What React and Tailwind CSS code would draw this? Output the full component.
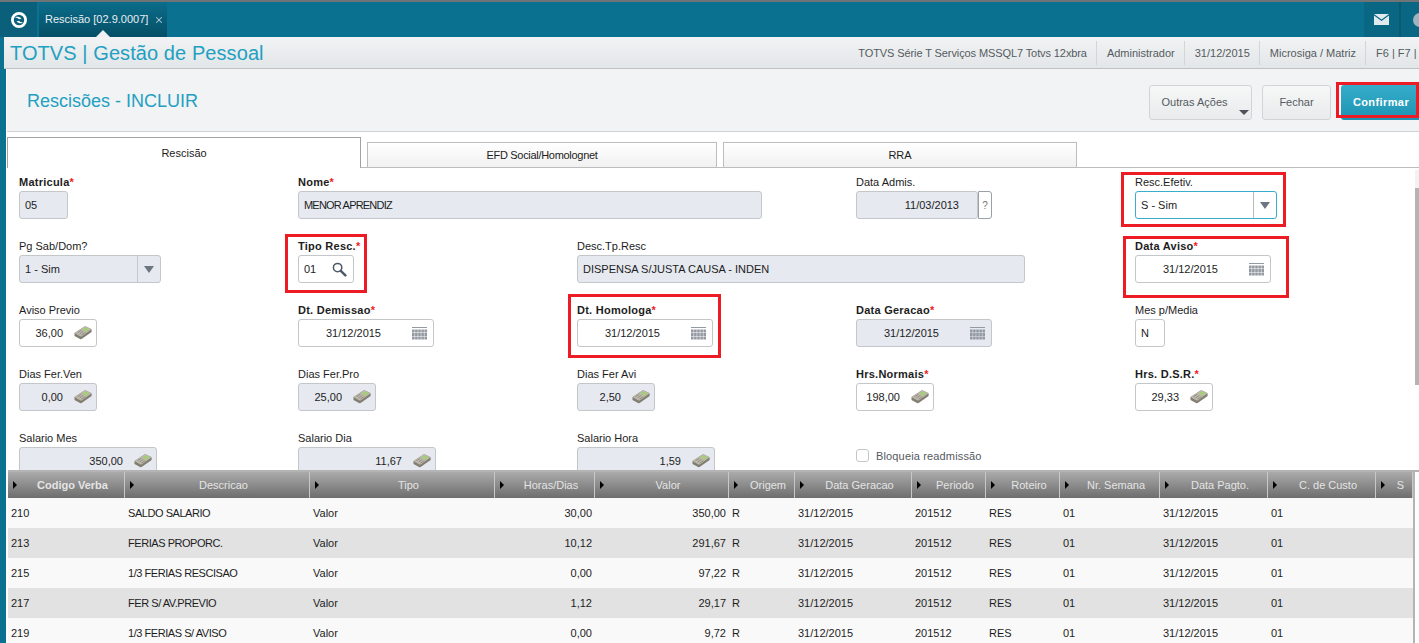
import { X } from 'lucide-react';

// ícones desenhados à mão
function Logo() {
  return (
    <svg width="18" height="18" viewBox="0 0 18 18" fill="none">
      <circle cx="9" cy="9" r="6.6" stroke="#fff" strokeWidth="2.8" />
      <path d="M5 6.2 C7 5.4 10 6 11.5 7.6 L9.2 8.2 C8 7.2 6.5 6.8 5 6.2 Z" fill="#fff" />
      <path d="M13 11.8 C11 12.6 8 12 6.5 10.4 L8.8 9.8 C10 10.8 11.5 11.2 13 11.8 Z" fill="#fff" />
    </svg>
  );
}

function Money() {
  return (
    <svg width="18" height="14" viewBox="0 0 18 14" className="shrink-0">
      <path d="M0.5 7 L10.5 0.6 Q11.5 0.2 12.5 0.7 L17.6 3.2 L17.6 6 L8 12.8 Q7 13.4 6 12.9 L0.5 10 Z" fill="#827e72" />
      <path d="M0.5 7 L10.5 0.6 Q11.5 0.2 12.5 0.7 L17.6 3.2 L8 10.2 Q7 10.7 6 10.2 Z" fill="#bdb9ad" />
      <path d="M8.6 3.4 L11.4 1.6 L15.4 3.6 L12.4 5.8 Z" fill="#a4cf73" />
      <path d="M3.4 6.8 L7.4 4.2 M5.4 8 L9.4 5.4 M7.4 9.2 L11.4 6.6" stroke="#8f8b7c" strokeWidth="0.9" />
    </svg>
  );
}

function Calendar() {
  return (
    <svg width="15" height="13" viewBox="0 0 15 13" className="shrink-0" fill="#949aa2">
      <rect x="0" y="0" width="15" height="1" />
      {[2.5, 6, 9.5].map((y) =>
        [0, 3.1, 6.2, 9.3, 12.4].map((x) => <rect key={`${x}-${y}`} x={x} y={y} width="2.6" height="3" />)
      )}
    </svg>
  );
}

function Lupa() {
  return (
    <svg width="15" height="15" viewBox="0 0 15 15" fill="none" className="shrink-0">
      <circle cx="5.6" cy="5.6" r="4.2" stroke="#4d5a66" strokeWidth="1.5" />
      <path d="M8.8 8.8 L13.4 13.4" stroke="#4d5a66" strokeWidth="2.4" strokeLinecap="round" />
    </svg>
  );
}

function Seta() {
  return <span className="w-0 h-0 border-x-[5px] border-x-transparent border-t-[7px] border-t-[#6d7680]" />;
}

function SetaHeader() {
  return <span className="w-0 h-0 border-y-[4px] border-y-transparent border-l-[4px] border-l-black shrink-0" />;
}

const redBox = 'absolute border-[3px] border-[#ed1c24] pointer-events-none';

function Field({ label, req, bold, value, w, off, align = 'left', pr, icon, combo, focus, mark, help, tight }) {
  return (
    <div className="relative h-[64px]">
      <div className={`h-4 text-[11px] leading-[14px] text-[#1d1d1d] whitespace-nowrap ${bold ? 'font-bold tracking-[0.25px]' : ''}`}>
        {label}
        {req && <span className="text-[#ed1c24]">*</span>}
      </div>
      <div className="flex">
        <div
          className={`h-[28px] shrink-0 flex items-center rounded-[3px] border text-[11px] text-[#1d1d1d] ${w} ${off ? 'bg-[#e6e9f0]' : 'bg-white'} ${focus ? 'border-[#39aecb]' : 'border-[#c4c7ca]'}`}
        >
          <span className={`flex-1 min-w-0 pl-[5px] whitespace-nowrap ${align === 'right' ? 'text-right' : ''} ${tight ? 'tracking-[-0.8px]' : ''} ${pr || ''}`}>{value}</span>
          {icon === 'money' && <span className="mr-[4px] flex"><Money /></span>}
          {icon === 'cal' && <span className="mr-[6px] flex"><Calendar /></span>}
          {icon === 'lupa' && <span className="mr-[6px] flex"><Lupa /></span>}
          {combo && (
            <span className={`h-full w-[23px] flex items-center justify-center border-l ${focus ? 'border-[#b5bbc0]' : 'border-[#c4c7ca]'}`}>
              <Seta />
            </span>
          )}
        </div>
        {help && (
          <div className="h-[28px] w-[14px] shrink-0 flex items-center justify-center rounded-r-[3px] border border-[#9aa0a6] text-[10px] text-[#777] bg-white">?</div>
        )}
      </div>
      {mark && <div className={`${redBox} ${mark}`} />}
    </div>
  );
}

const colunas = [
  ['Codigo Verba', 'w-[117px]', 'font-bold'],
  ['Descricao', 'w-[185px]', ''],
  ['Tipo', 'w-[185px]', ''],
  ['Horas/Dias', 'w-[100px]', ''],
  ['Valor', 'w-[134px]', ''],
  ['Origem', 'w-[66px]', ''],
  ['Data Geracao', 'w-[117px]', ''],
  ['Periodo', 'w-[74px]', ''],
  ['Roteiro', 'w-[74px]', ''],
  ['Nr. Semana', 'w-[100px]', ''],
  ['Data Pagto.', 'w-[108px]', ''],
  ['C. de Custo', 'w-[108px]', ''],
  ['S', 'w-[37px]', ''],
];

const linhas = [
  ['210', 'SALDO SALARIO', '30,00', '350,00'],
  ['213', 'FERIAS PROPORC.', '10,12', '291,67'],
  ['215', '1/3 FERIAS RESCISAO', '0,00', '97,22'],
  ['217', 'FER S/ AV.PREVIO', '1,12', '29,17'],
  ['219', '1/3 FERIAS S/ AVISO', '0,00', '9,72'],
];

function Linha({ dados, par }) {
  const [cod, desc, horas, valor] = dados;
  const cell = 'shrink-0 px-[3px] whitespace-nowrap overflow-hidden';
  return (
    <div className={`h-[30px] flex items-center text-[11px] text-[#1d1d1d] ${par ? 'bg-[#e2e2e2]' : 'bg-[#f9f9f9]'}`}>
      <div className={`${cell} w-[117px]`}>{cod}</div>
      <div className={`${cell} w-[185px] tracking-[-0.45px]`}>{desc}</div>
      <div className={`${cell} w-[185px]`}>Valor</div>
      <div className={`${cell} w-[100px] text-right`}>{horas}</div>
      <div className={`${cell} w-[134px] text-right`}>{valor}</div>
      <div className={`${cell} w-[66px]`}>R</div>
      <div className={`${cell} w-[117px]`}>31/12/2015</div>
      <div className={`${cell} w-[74px]`}>201512</div>
      <div className={`${cell} w-[74px]`}>RES</div>
      <div className={`${cell} w-[100px]`}>01</div>
      <div className={`${cell} w-[108px]`}>31/12/2015</div>
      <div className={`${cell} w-[108px]`}>01</div>
    </div>
  );
}

export default function App() {
  return (
    <div className="w-[1419px] h-[643px] overflow-hidden flex flex-col bg-[#0b7190] font-['Liberation_Sans',Arial,sans-serif]">
      {/* barra superior */}
      <div className="h-[37px] shrink-0 flex border-t-2 border-[#6f7477] bg-[#0b7190]">
        <div className="w-[38px] flex items-center justify-center bg-[#0a5f7b] border-r border-[#0b7190]"><Logo /></div>
        <div className="relative ml-px w-[128px] flex items-center pl-[6px] gap-[6px] bg-gradient-to-b from-[#0b6d8a] to-[#064f66] text-[11px] text-[#e6eef2]">
          <span>Rescisão [02.9.0007]</span>
          <X size={10} color="#b8ccd6" strokeWidth={2.5} />
          <span className="absolute bottom-0 left-[57px] w-0 h-0 border-x-[7px] border-x-transparent border-b-[7px] border-b-[#eef0f2]" />
        </div>
        <div className="flex-1" />
        <div className="w-[37px] flex items-center justify-center bg-[#0a6783] border-r-2 border-[#085a73]">
          <svg width="15" height="11" viewBox="0 0 15 11">
            <path d="M0 0 H15 L7.5 5.5 Z" fill="#dfe9ee" />
            <path d="M0 1.6 L7.5 7 L15 1.6 V11 H0 Z" fill="#dfe9ee" />
          </svg>
        </div>
        <div className="w-[18px] flex items-center pl-3 overflow-hidden bg-[#0a6783]">
          <span className="w-[14px] h-[14px] shrink-0 rounded-full bg-[#9fb4bf]" />
        </div>
      </div>

      {/* faixa do módulo */}
      <div className="h-[32px] shrink-0 ml-[4px] flex items-center justify-between border-b border-[#bfc3c6] bg-gradient-to-b from-[#f1f3f4] to-[#e3e6e8]">
        <div className="pl-[6px] text-[20px] leading-none tracking-[0.08px] text-[#22a0c2]">TOTVS | Gestão de Pessoal</div>
        <div className="flex items-center text-[11px] text-[#555b61] whitespace-nowrap">
          <span className="pr-[9px] h-[24px] leading-[24px] border-r border-[#d3d6d8] tracking-[-0.1px]">TOTVS Série T Serviços MSSQL7 Totvs 12xbra</span>
          <span className="pl-[10px] pr-[9px] h-[24px] leading-[24px] border-r border-[#d3d6d8]">Administrador</span>
          <span className="pl-[10px] pr-[9px] h-[24px] leading-[24px] border-r border-[#d3d6d8]">31/12/2015</span>
          <span className="pl-[10px] pr-[9px] h-[24px] leading-[24px] border-r border-[#d3d6d8]">Microsiga / Matriz</span>
          <span className="pl-[10px] w-[53px] overflow-hidden h-[24px] leading-[24px]">F6 | F7 | F8</span>
        </div>
      </div>

      <div className="flex-1 min-h-0 ml-[6px] flex flex-col bg-white">
        {/* título e ações */}
        <div className="h-[63px] shrink-0 ml-px pt-[3px] flex items-center justify-between border-b border-[#cfd2d4] bg-[#f1f3f4]">
          <div className="pl-[20px] text-[18px] text-[#22a0c2]">Rescisões - INCLUIR</div>
          <div className="relative flex items-center gap-[10px] text-[11px] mt-[1px]">
            <div className="relative w-[103px] h-[35px] flex items-center justify-center pr-[12px] rounded-[3px] border border-[#d2d5d7] bg-gradient-to-b from-[#f6f7f7] to-[#e9ebec] text-[#555b61]">
              Outras Ações
              <span className="absolute right-[2px] bottom-[4px] w-0 h-0 border-x-[5px] border-x-transparent border-t-[5px] border-t-[#4d5359]" />
            </div>
            <div className="w-[69px] h-[35px] flex items-center justify-center rounded-[3px] border border-[#d2d5d7] bg-gradient-to-b from-[#f6f7f7] to-[#e9ebec] text-[#555b61]">Fechar</div>
            <div className="w-[78px] h-[35px] flex items-center justify-center pl-[2px] rounded-l-[3px] bg-gradient-to-b from-[#35adca] to-[#1c93b3] font-bold tracking-[0.4px] text-white">Confirmar</div>
            <div className={`${redBox} left-[187px] top-[-3px] w-[83px] h-[36px]`} />
          </div>
        </div>

        {/* abas */}
        <div className="h-[36px] shrink-0 ml-px flex items-end border-b border-[#bdbdbd] bg-white text-[11px] text-[#1d1d1d]">
          <div className="w-[354px] h-[31px] mb-[-1px] flex items-center justify-center bg-white border border-b-0 border-[#9fa3a6]">Rescisão</div>
          <div className="w-[350px] h-[25px] ml-[6px] flex items-center justify-center bg-gradient-to-b from-white to-[#f1f1f1] border border-b-0 border-[#bdbdbd] tracking-[-0.3px]">EFD Social/Homolognet</div>
          <div className="w-[354px] h-[25px] ml-[6px] flex items-center justify-center bg-gradient-to-b from-white to-[#f1f1f1] border border-b-0 border-[#bdbdbd]">RRA</div>
        </div>

        {/* formulário */}
        <div className="relative h-[302px] shrink-0 overflow-hidden pl-[13px] pt-[7px]">
          <div className="grid grid-cols-[279px_279px_279px_279px_279px]">
            <Field label="Matricula" req bold value="05" w="w-[49px]" off />
            <Field label="Nome" req bold value="MENOR APRENDIZ" tight w="w-[464px]" off />
            <div />
            <Field label="Data Admis." value="11/03/2013" w="w-[122px]" off align="right" pr="pr-[18px]" help />
            <Field label="Resc.Efetiv." value="S - Sim" w="w-[142px]" combo focus mark="left-[-14px] top-[-3px] w-[165px] h-[55px]" />

            <Field label="Pg Sab/Dom?" value="1 - Sim" w="w-[142px]" off combo />
            <Field label="Tipo Resc." req bold value="01" w="w-[56px]" icon="lupa" mark="left-[-13px] top-[-5px] w-[82px] h-[59px]" />
            <Field label="Desc.Tp.Resc" value="DISPENSA S/JUSTA CAUSA - INDEN" w="w-[448px]" off />
            <div />
            <Field label="Data Aviso" req bold value="31/12/2015" w="w-[136px]" icon="cal" align="right" pr="pr-[31px]" mark="left-[-12px] top-[-3px] w-[166px] h-[62px]" />

            <Field label="Aviso Previo" value="36,00" w="w-[78px]" icon="money" align="right" pr="pr-[11px]" />
            <Field label="Dt. Demissao" req bold value="31/12/2015" w="w-[136px]" icon="cal" align="right" pr="pr-[31px]" />
            <Field label="Dt. Homologa" req bold value="31/12/2015" w="w-[136px]" icon="cal" align="right" pr="pr-[31px]" mark="left-[-9px] top-[-9px] w-[153px] h-[64px]" />
            <Field label="Data Geracao" req bold value="31/12/2015" w="w-[136px]" off icon="cal" align="right" pr="pr-[31px]" />
            <Field label="Mes p/Media" value="N" w="w-[30px]" />

            <Field label="Dias Fer.Ven" value="0,00" w="w-[78px]" off icon="money" align="right" pr="pr-[11px]" />
            <Field label="Dias Fer.Pro" value="25,00" w="w-[78px]" off icon="money" align="right" pr="pr-[11px]" />
            <Field label="Dias Fer Avi" value="2,50" w="w-[78px]" off icon="money" align="right" pr="pr-[11px]" />
            <Field label="Hrs.Normais" req bold value="198,00" w="w-[78px]" icon="money" align="right" pr="pr-[11px]" />
            <Field label="Hrs. D.S.R." req bold value="29,33" w="w-[78px]" icon="money" align="right" pr="pr-[11px]" />

            <Field label="Salario Mes" value="350,00" w="w-[138px]" off icon="money" align="right" pr="pr-[11px]" />
            <Field label="Salario Dia" value="11,67" w="w-[138px]" off icon="money" align="right" pr="pr-[11px]" />
            <Field label="Salario Hora" value="1,59" w="w-[138px]" off icon="money" align="right" pr="pr-[11px]" />
            <div className="flex items-start gap-[7px] pt-[17px] text-[11px] tracking-[0.15px] text-[#55595e]">
              <span className="w-[13px] h-[13px] mt-px rounded-[3px] border border-[#c4c7ca] bg-white" />
              Bloqueia readmissão
            </div>
          </div>
          {/* barra de rolagem */}
          <div className="absolute right-0 top-[2px] bottom-[85px] w-[4px] flex flex-col bg-[#f2f2f2]">
            <div className="h-[18px] shrink-0" />
            <div className="flex-1 bg-[#b4b4b4]" />
          </div>
        </div>

        {/* grade de verbas */}
        <div className="flex-1 min-h-0 ml-[2px] overflow-hidden border-t-2 border-[#b4b4b4] bg-white flex">
          <div className="w-[1405px] shrink-0">
            <div className="h-[26px] flex bg-gradient-to-b from-[#ababab] to-[#6e6e6e] text-[11px] text-[#e4e4e4]">
              {colunas.map(([nome, w, peso]) => (
                <div key={nome} className={`${w} shrink-0 flex items-center pl-[5px] border-r border-[#c8c8c8] overflow-hidden`}>
                  <SetaHeader />
                  <span className={`flex-1 pl-[4px] text-center whitespace-nowrap ${peso}`}>{nome}</span>
                </div>
              ))}
            </div>
            {linhas.map((l, i) => (
              <Linha key={l[0]} dados={l} par={i % 2 === 1} />
            ))}
          </div>
          <div className="flex-1 border-l-2 border-[#b4b4b4] bg-white" />
        </div>
      </div>
    </div>
  );
}
